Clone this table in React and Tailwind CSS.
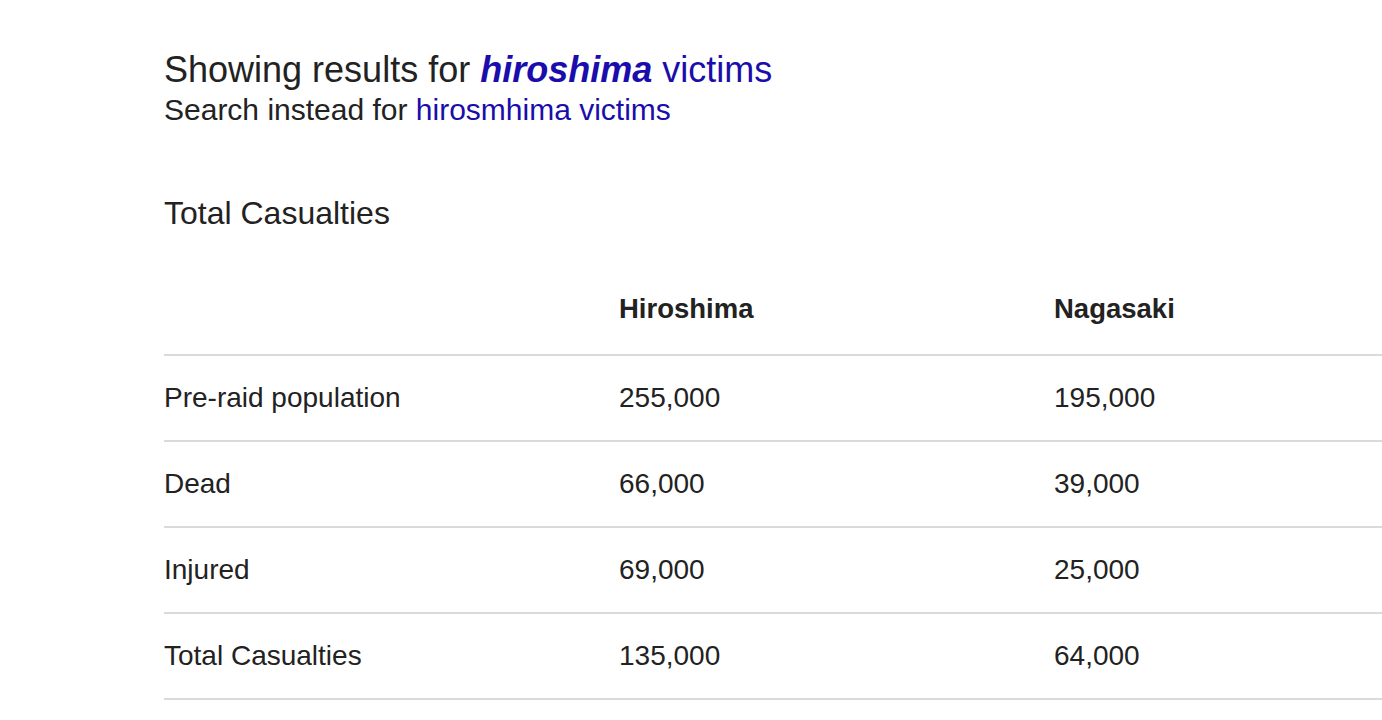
const rows = [
    { label: 'Pre-raid population', hiroshima: '255,000', nagasaki: '195,000' },
    { label: 'Dead', hiroshima: '66,000', nagasaki: '39,000' },
    { label: 'Injured', hiroshima: '69,000', nagasaki: '25,000' },
    { label: 'Total Casualties', hiroshima: '135,000', nagasaki: '64,000' },
];

const App = () => {
    return (
        <div className="min-h-screen bg-white pl-[164px] pt-[50px] text-[#222222] font-['Liberation_Sans',Arial,sans-serif]">
            {/* Spelling correction */}
            <div className="text-[36px] leading-[40px]">
                Showing results for{' '}
                <a href="#" className="text-[#1a0dab]">
                    <b><i>hiroshima</i></b> victims
                </a>
            </div>
            <div className="text-[30px] leading-[40px]">
                Search instead for <a href="#" className="text-[#1a0dab]">hirosmhima victims</a>
            </div>

            <h2 className="mt-[63px] text-[32px] leading-[40px]">Total Casualties</h2>

            <table className="mt-[31px] w-[1218px] border-collapse text-[28px] table-fixed">
                <colgroup>
                    <col className="w-[455px]" />
                    <col className="w-[435px]" />
                    <col className="w-[328px]" />
                </colgroup>
                <thead>
                    <tr className="h-[91px] border-b-2 border-[#dadada]">
                        <th></th>
                        <th className="text-left font-bold text-[27.5px]">Hiroshima</th>
                        <th className="text-left font-bold text-[27.5px]">Nagasaki</th>
                    </tr>
                </thead>
                <tbody>
                    {rows.map(row => (
                        <tr key={row.label} className="h-[86px] border-b-2 border-[#dadada]">
                            <td className="p-0">{row.label}</td>
                            <td className="p-0">{row.hiroshima}</td>
                            <td className="p-0">{row.nagasaki}</td>
                        </tr>
                    ))}
                </tbody>
            </table>
        </div>
    );
};

export default App;
